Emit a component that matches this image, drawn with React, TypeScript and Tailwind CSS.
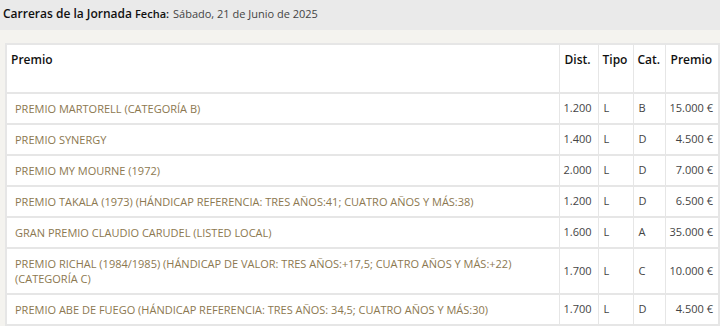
import React from 'react'

type Race = {
  name: string
  dist: string
  tipo: string
  cat: string
  premio: string
}

const races: Race[] = [
  { name: 'PREMIO MARTORELL (CATEGORÍA B)', dist: '1.200', tipo: 'L', cat: 'B', premio: '15.000 €' },
  { name: 'PREMIO SYNERGY', dist: '1.400', tipo: 'L', cat: 'D', premio: '4.500 €' },
  { name: 'PREMIO MY MOURNE (1972)', dist: '2.000', tipo: 'L', cat: 'D', premio: '7.000 €' },
  { name: 'PREMIO TAKALA (1973) (HÁNDICAP REFERENCIA: TRES AÑOS:41; CUATRO AÑOS Y MÁS:38)', dist: '1.200', tipo: 'L', cat: 'D', premio: '6.500 €' },
  { name: 'GRAN PREMIO CLAUDIO CARUDEL (LISTED LOCAL)', dist: '1.600', tipo: 'L', cat: 'A', premio: '35.000 €' },
  { name: 'PREMIO RICHAL (1984/1985) (HÁNDICAP DE VALOR: TRES AÑOS:+17,5; CUATRO AÑOS Y MÁS:+22) (CATEGORÍA C)', dist: '1.700', tipo: 'L', cat: 'C', premio: '10.000 €' },
  { name: 'PREMIO ABE DE FUEGO (HÁNDICAP REFERENCIA: TRES AÑOS: 34,5; CUATRO AÑOS Y MÁS:30)', dist: '1.700', tipo: 'L', cat: 'D', premio: '4.500 €' },
]

const App: React.FC = () => {
  return (
    <div className="min-h-[326px] bg-[#f4f3ef] font-['Open_Sans',sans-serif] overflow-hidden">
      <div className="h-[30px] bg-[#eaeaea] px-[3px] pb-[2px] flex items-center">
        <span className="text-[12px] font-semibold text-[#111]">Carreras de la Jornada</span>
        <span className="ml-[3px] text-[11px] font-semibold text-[#111]">Fecha:</span>
        <span className="ml-[4px] text-[11px] text-[#444]">Sábado, 21 de Junio de 2025</span>
      </div>

      <div className="pt-[13px] pl-[5px]">
        <table className="w-[713px] table-fixed border-collapse bg-white border-2 border-[#e6e6e6]">
          <colgroup>
            <col className="w-[553px]" />
            <col className="w-[39px]" />
            <col className="w-[35px]" />
            <col className="w-[32px]" />
            <col className="w-[54px]" />
          </colgroup>
          <thead>
            <tr className="h-[49px] border-b-2 border-[#e6e6e6] text-[12px] text-[#111] align-top text-left">
              <th className="pl-[4px] pt-[6px] font-semibold">Premio</th>
              <th className="pl-[5px] pt-[6px] border-l border-[#e6e6e6] font-semibold">Dist.</th>
              <th className="pl-[4px] pt-[6px] border-l border-[#e6e6e6] font-semibold">Tipo</th>
              <th className="pl-[4px] pt-[6px] border-l border-[#e6e6e6] font-semibold">Cat.</th>
              <th className="pl-[5px] pt-[6px] border-l border-[#e6e6e6] font-semibold">Premio</th>
            </tr>
          </thead>
          <tbody>
            {races.map((r) => (
              <tr key={r.name} className="border-b-2 border-[#e6e6e6] text-[11px] align-middle">
                <td className="pl-[8px] pr-[6px] py-[7px] leading-[15px] text-[#8c7850]">{r.name}</td>
                <td className="pl-[4px] border-l border-[#e6e6e6] text-[#444]">{r.dist}</td>
                <td className="pl-[5px] border-l border-[#e6e6e6] text-[#444]">{r.tipo}</td>
                <td className="pl-[5px] border-l border-[#e6e6e6] text-[#444]">{r.cat}</td>
                <td className="pr-[5px] border-l border-[#e6e6e6] text-right text-[#444]">{r.premio}</td>
              </tr>
            ))}
          </tbody>
        </table>
      </div>
    </div>
  )
}

export default App
